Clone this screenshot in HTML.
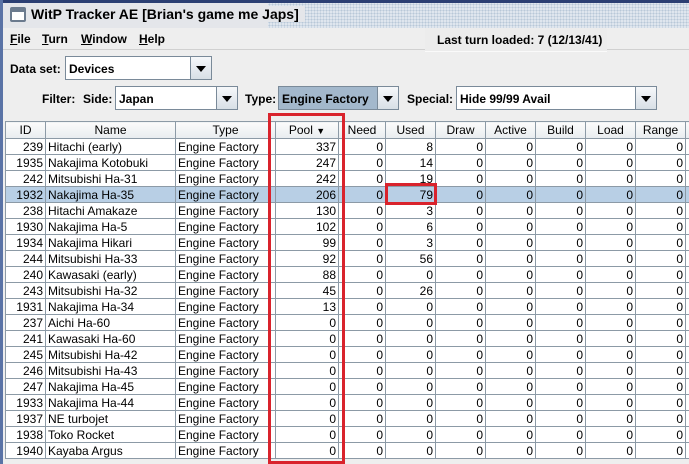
<!DOCTYPE html>
<html><head><style>
*{margin:0;padding:0;box-sizing:border-box}
body{width:689px;height:464px;overflow:hidden;background:#eeeeee;font-family:"Liberation Sans",sans-serif;font-size:12px;color:#000;position:relative}
.abs{position:absolute}
.combo{position:absolute;height:24px;background:#fff;border:1px solid #7a8a99;font-weight:bold;font-size:12px;padding:5px 3px;white-space:nowrap;overflow:hidden}
.btn{position:absolute;width:22px;height:24px;border:1px solid #7a8a99;background:linear-gradient(#f6f8fa,#d8dfe6)}
.btn:after{content:"";position:absolute;left:5px;top:9px;border-left:5px solid transparent;border-right:5px solid transparent;border-top:6px solid #000}
.lbl{position:absolute;font-weight:bold;font-size:12px;white-space:nowrap}
table{position:absolute;left:5px;top:121px;border-collapse:collapse;table-layout:fixed;background:#fff;width:700px}
td,th{border:1px solid #8c9aa6;height:16px;padding:0 2px;font-size:12px;white-space:nowrap;overflow:hidden;font-weight:normal;line-height:14px}
th{height:17px;background:linear-gradient(#fbfbfb,#e8ecef);text-align:center}
td.n{text-align:right}
tr.sel td{background:#b8cfe5}
</style></head><body>
<div class="abs" style="left:0;top:0;width:689px;height:3px;background:#2b3f73"></div>
<div class="abs" style="left:0;top:0;width:3px;height:464px;background:#5a73a6"></div>
<div class="abs" style="left:3px;top:3px;width:686px;height:25px;background:#e4e6ea"></div>
<div class="abs" style="left:268px;top:3px;width:421px;height:25px;background-image:radial-gradient(#b8c8d8 0.8px,transparent 0.9px);background-size:3px 3px;background-color:#dfe6ee"></div>
<div class="abs" style="left:10px;top:7px;width:16px;height:15px;border:2px solid #6b7b8e;border-radius:2px;background:#fff;border-top-width:5px"></div>
<div class="abs" style="left:31px;top:6px;font-weight:bold;font-size:14px;background:#e4e6ea;padding-right:6px">WitP Tracker AE [Brian's game me Japs]</div>
<div class="abs" style="left:3px;top:28px;width:686px;height:22px;background:#eeeeee;border-bottom:1px solid #d0d0d0"></div>
<div class="lbl" style="left:10px;top:32px"><u>F</u>ile</div>
<div class="lbl" style="left:42px;top:32px"><u>T</u>urn</div>
<div class="lbl" style="left:81px;top:32px"><u>W</u>indow</div>
<div class="lbl" style="left:139px;top:32px"><u>H</u>elp</div>
<div class="abs" style="left:425px;top:28px;width:182px;height:24px;background:#ececec;border-bottom:1px solid #fafafa"></div>
<div class="lbl" style="left:437px;top:33px">Last turn loaded: 7 (12/13/41)</div>
<div class="lbl" style="left:10px;top:62px">Data set:</div>
<div class="combo" style="left:65px;top:56px;width:127px">Devices</div><div class="btn" style="left:190px;top:56px"></div>
<div class="lbl" style="left:42px;top:92px">Filter:</div>
<div class="lbl" style="left:83px;top:92px">Side:</div>
<div class="combo" style="left:115px;top:86px;width:103px">Japan</div><div class="btn" style="left:216px;top:86px"></div>
<div class="lbl" style="left:245px;top:92px">Type:</div>
<div class="combo" style="left:278px;top:86px;width:101px;background:#a3b8cc">Engine Factory</div><div class="btn" style="left:377px;top:86px"></div>
<div class="lbl" style="left:407px;top:92px">Special:</div>
<div class="combo" style="left:456px;top:86px;width:181px">Hide 99/99 Avail</div><div class="btn" style="left:635px;top:86px"></div>
<table>
<colgroup><col style="width:40px"><col style="width:130px"><col style="width:100px"><col style="width:63px"><col style="width:47px"><col style="width:50px"><col style="width:50px"><col style="width:50px"><col style="width:50px"><col style="width:50px"><col style="width:50px"><col style="width:20px"></colgroup>
<tr><th>ID</th><th>Name</th><th>Type</th><th>Pool <span style="font-size:9px">&#9660;</span></th><th>Need</th><th>Used</th><th>Draw</th><th>Active</th><th>Build</th><th>Load</th><th>Range</th><th></th></tr>
<tr><td class="n">239</td><td>Hitachi (early)</td><td>Engine Factory</td><td class="n">337</td><td class="n">0</td><td class="n">8</td><td class="n">0</td><td class="n">0</td><td class="n">0</td><td class="n">0</td><td class="n">0</td><td></td></tr>
<tr><td class="n">1935</td><td>Nakajima Kotobuki</td><td>Engine Factory</td><td class="n">247</td><td class="n">0</td><td class="n">14</td><td class="n">0</td><td class="n">0</td><td class="n">0</td><td class="n">0</td><td class="n">0</td><td></td></tr>
<tr><td class="n">242</td><td>Mitsubishi Ha-31</td><td>Engine Factory</td><td class="n">242</td><td class="n">0</td><td class="n">19</td><td class="n">0</td><td class="n">0</td><td class="n">0</td><td class="n">0</td><td class="n">0</td><td></td></tr>
<tr class="sel"><td class="n">1932</td><td>Nakajima Ha-35</td><td>Engine Factory</td><td class="n">206</td><td class="n">0</td><td class="n">79</td><td class="n">0</td><td class="n">0</td><td class="n">0</td><td class="n">0</td><td class="n">0</td><td></td></tr>
<tr><td class="n">238</td><td>Hitachi Amakaze</td><td>Engine Factory</td><td class="n">130</td><td class="n">0</td><td class="n">3</td><td class="n">0</td><td class="n">0</td><td class="n">0</td><td class="n">0</td><td class="n">0</td><td></td></tr>
<tr><td class="n">1930</td><td>Nakajima Ha-5</td><td>Engine Factory</td><td class="n">102</td><td class="n">0</td><td class="n">6</td><td class="n">0</td><td class="n">0</td><td class="n">0</td><td class="n">0</td><td class="n">0</td><td></td></tr>
<tr><td class="n">1934</td><td>Nakajima Hikari</td><td>Engine Factory</td><td class="n">99</td><td class="n">0</td><td class="n">3</td><td class="n">0</td><td class="n">0</td><td class="n">0</td><td class="n">0</td><td class="n">0</td><td></td></tr>
<tr><td class="n">244</td><td>Mitsubishi Ha-33</td><td>Engine Factory</td><td class="n">92</td><td class="n">0</td><td class="n">56</td><td class="n">0</td><td class="n">0</td><td class="n">0</td><td class="n">0</td><td class="n">0</td><td></td></tr>
<tr><td class="n">240</td><td>Kawasaki (early)</td><td>Engine Factory</td><td class="n">88</td><td class="n">0</td><td class="n">0</td><td class="n">0</td><td class="n">0</td><td class="n">0</td><td class="n">0</td><td class="n">0</td><td></td></tr>
<tr><td class="n">243</td><td>Mitsubishi Ha-32</td><td>Engine Factory</td><td class="n">45</td><td class="n">0</td><td class="n">26</td><td class="n">0</td><td class="n">0</td><td class="n">0</td><td class="n">0</td><td class="n">0</td><td></td></tr>
<tr><td class="n">1931</td><td>Nakajima Ha-34</td><td>Engine Factory</td><td class="n">13</td><td class="n">0</td><td class="n">0</td><td class="n">0</td><td class="n">0</td><td class="n">0</td><td class="n">0</td><td class="n">0</td><td></td></tr>
<tr><td class="n">237</td><td>Aichi Ha-60</td><td>Engine Factory</td><td class="n">0</td><td class="n">0</td><td class="n">0</td><td class="n">0</td><td class="n">0</td><td class="n">0</td><td class="n">0</td><td class="n">0</td><td></td></tr>
<tr><td class="n">241</td><td>Kawasaki Ha-60</td><td>Engine Factory</td><td class="n">0</td><td class="n">0</td><td class="n">0</td><td class="n">0</td><td class="n">0</td><td class="n">0</td><td class="n">0</td><td class="n">0</td><td></td></tr>
<tr><td class="n">245</td><td>Mitsubishi Ha-42</td><td>Engine Factory</td><td class="n">0</td><td class="n">0</td><td class="n">0</td><td class="n">0</td><td class="n">0</td><td class="n">0</td><td class="n">0</td><td class="n">0</td><td></td></tr>
<tr><td class="n">246</td><td>Mitsubishi Ha-43</td><td>Engine Factory</td><td class="n">0</td><td class="n">0</td><td class="n">0</td><td class="n">0</td><td class="n">0</td><td class="n">0</td><td class="n">0</td><td class="n">0</td><td></td></tr>
<tr><td class="n">247</td><td>Nakajima Ha-45</td><td>Engine Factory</td><td class="n">0</td><td class="n">0</td><td class="n">0</td><td class="n">0</td><td class="n">0</td><td class="n">0</td><td class="n">0</td><td class="n">0</td><td></td></tr>
<tr><td class="n">1933</td><td>Nakajima Ha-44</td><td>Engine Factory</td><td class="n">0</td><td class="n">0</td><td class="n">0</td><td class="n">0</td><td class="n">0</td><td class="n">0</td><td class="n">0</td><td class="n">0</td><td></td></tr>
<tr><td class="n">1937</td><td>NE turbojet</td><td>Engine Factory</td><td class="n">0</td><td class="n">0</td><td class="n">0</td><td class="n">0</td><td class="n">0</td><td class="n">0</td><td class="n">0</td><td class="n">0</td><td></td></tr>
<tr><td class="n">1938</td><td>Toko Rocket</td><td>Engine Factory</td><td class="n">0</td><td class="n">0</td><td class="n">0</td><td class="n">0</td><td class="n">0</td><td class="n">0</td><td class="n">0</td><td class="n">0</td><td></td></tr>
<tr><td class="n">1940</td><td>Kayaba Argus</td><td>Engine Factory</td><td class="n">0</td><td class="n">0</td><td class="n">0</td><td class="n">0</td><td class="n">0</td><td class="n">0</td><td class="n">0</td><td class="n">0</td><td></td></tr>
</table>
<div class="abs" style="left:268px;top:113px;width:77px;height:351px;border:3px solid #d9232c"></div>
<div class="abs" style="left:385px;top:183px;width:52px;height:22px;border:3px solid #d9232c"></div>
</body></html>
